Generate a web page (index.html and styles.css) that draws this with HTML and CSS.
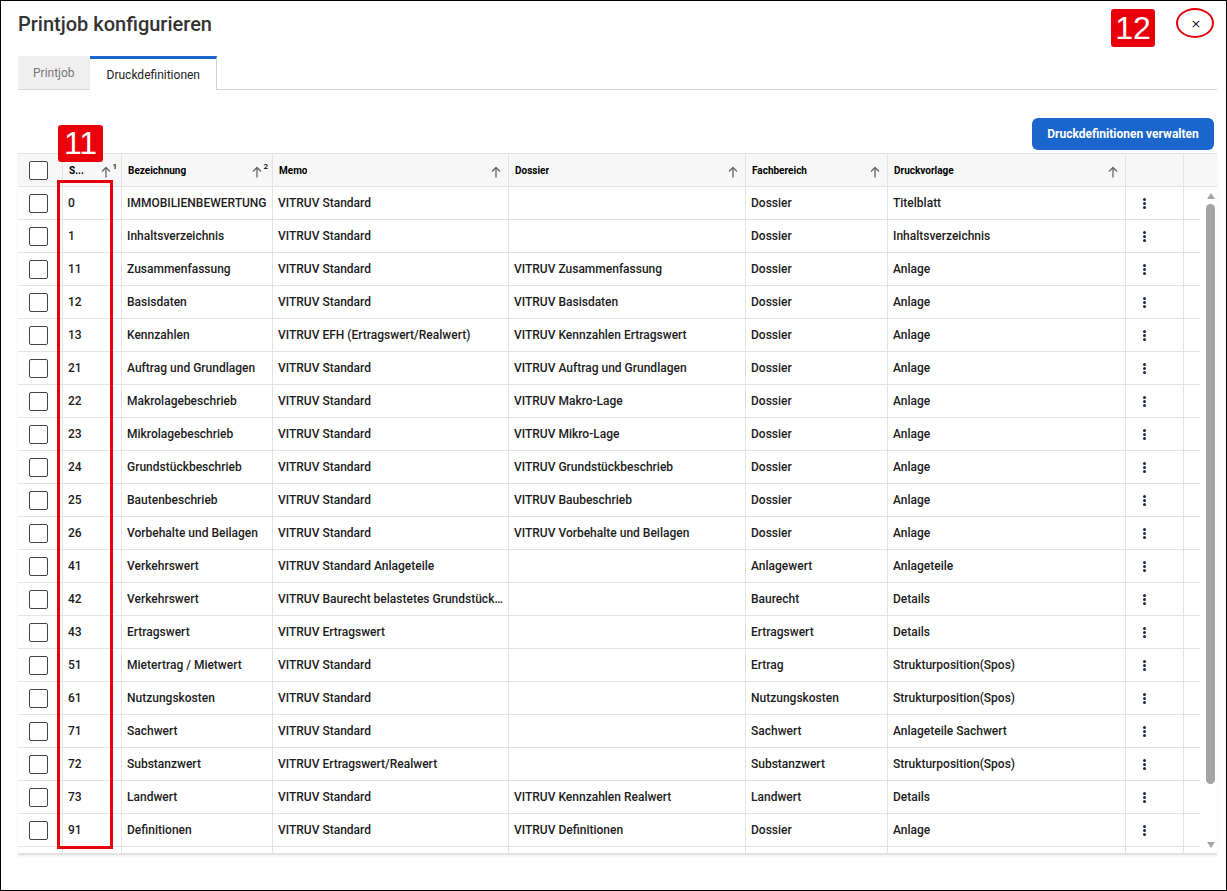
FILE: index.html
```html
<!DOCTYPE html>
<html lang="de">
<head>
    <meta charset="UTF-8">
    <title>Printjob konfigurieren</title>
    <link rel="stylesheet" href="styles.css">
</head>
<body>
    <div class="dialog">
        <div class="dialogHead">
            <h1 class="title">Printjob konfigurieren</h1>
            <button class="close">&times;</button>
        </div>
        <div class="tabs">
            <div class="tab">Printjob</div>
            <div class="tab active">Druckdefinitionen</div>
        </div>
        <div class="toolbar">
            <button class="primary">Druckdefinitionen verwalten</button>
        </div>
        <div class="grid">
            <div class="gridHead">
                <div class="row headRow">
                    <div class="hcell check"><span class="box"></span></div>
                    <div class="hcell"><span class="label">S...</span><span class="sort"><svg viewBox="0 0 10 12"><path d="M5 11.5V1.5M1 5.5L5 1.5L9 5.5"/></svg><sup>1</sup></span></div>
                    <div class="hcell"><span class="label">Bezeichnung</span><span class="sort"><svg viewBox="0 0 10 12"><path d="M5 11.5V1.5M1 5.5L5 1.5L9 5.5"/></svg><sup>2</sup></span></div>
                    <div class="hcell"><span class="label">Memo</span><span class="sort"><svg viewBox="0 0 10 12"><path d="M5 11.5V1.5M1 5.5L5 1.5L9 5.5"/></svg></span></div>
                    <div class="hcell"><span class="label">Dossier</span><span class="sort"><svg viewBox="0 0 10 12"><path d="M5 11.5V1.5M1 5.5L5 1.5L9 5.5"/></svg></span></div>
                    <div class="hcell"><span class="label">Fachbereich</span><span class="sort"><svg viewBox="0 0 10 12"><path d="M5 11.5V1.5M1 5.5L5 1.5L9 5.5"/></svg></span></div>
                    <div class="hcell"><span class="label">Druckvorlage</span><span class="sort"><svg viewBox="0 0 10 12"><path d="M5 11.5V1.5M1 5.5L5 1.5L9 5.5"/></svg></span></div>
                    <div class="hcell"></div>
                    <div class="hcell"></div>
                </div>
                <div class="scrollHead"></div>
            </div>
            <div class="gridBody">
                <div class="rows">
                    <div class="row"><div class="cell check"><span class="box"></span></div><div class="cell">0</div><div class="cell">IMMOBILIENBEWERTUNG</div><div class="cell">VITRUV Standard</div><div class="cell"></div><div class="cell">Dossier</div><div class="cell">Titelblatt</div><div class="cell menu"><span class="kebab"></span></div><div class="cell"></div></div>
                    <div class="row"><div class="cell check"><span class="box"></span></div><div class="cell">1</div><div class="cell">Inhaltsverzeichnis</div><div class="cell">VITRUV Standard</div><div class="cell"></div><div class="cell">Dossier</div><div class="cell">Inhaltsverzeichnis</div><div class="cell menu"><span class="kebab"></span></div><div class="cell"></div></div>
                    <div class="row"><div class="cell check"><span class="box"></span></div><div class="cell">11</div><div class="cell">Zusammenfassung</div><div class="cell">VITRUV Standard</div><div class="cell">VITRUV Zusammenfassung</div><div class="cell">Dossier</div><div class="cell">Anlage</div><div class="cell menu"><span class="kebab"></span></div><div class="cell"></div></div>
                    <div class="row"><div class="cell check"><span class="box"></span></div><div class="cell">12</div><div class="cell">Basisdaten</div><div class="cell">VITRUV Standard</div><div class="cell">VITRUV Basisdaten</div><div class="cell">Dossier</div><div class="cell">Anlage</div><div class="cell menu"><span class="kebab"></span></div><div class="cell"></div></div>
                    <div class="row"><div class="cell check"><span class="box"></span></div><div class="cell">13</div><div class="cell">Kennzahlen</div><div class="cell">VITRUV EFH (Ertragswert/Realwert)</div><div class="cell">VITRUV Kennzahlen Ertragswert</div><div class="cell">Dossier</div><div class="cell">Anlage</div><div class="cell menu"><span class="kebab"></span></div><div class="cell"></div></div>
                    <div class="row"><div class="cell check"><span class="box"></span></div><div class="cell">21</div><div class="cell">Auftrag und Grundlagen</div><div class="cell">VITRUV Standard</div><div class="cell">VITRUV Auftrag und Grundlagen</div><div class="cell">Dossier</div><div class="cell">Anlage</div><div class="cell menu"><span class="kebab"></span></div><div class="cell"></div></div>
                    <div class="row"><div class="cell check"><span class="box"></span></div><div class="cell">22</div><div class="cell">Makrolagebeschrieb</div><div class="cell">VITRUV Standard</div><div class="cell">VITRUV Makro-Lage</div><div class="cell">Dossier</div><div class="cell">Anlage</div><div class="cell menu"><span class="kebab"></span></div><div class="cell"></div></div>
                    <div class="row"><div class="cell check"><span class="box"></span></div><div class="cell">23</div><div class="cell">Mikrolagebeschrieb</div><div class="cell">VITRUV Standard</div><div class="cell">VITRUV Mikro-Lage</div><div class="cell">Dossier</div><div class="cell">Anlage</div><div class="cell menu"><span class="kebab"></span></div><div class="cell"></div></div>
                    <div class="row"><div class="cell check"><span class="box"></span></div><div class="cell">24</div><div class="cell">Grundstückbeschrieb</div><div class="cell">VITRUV Standard</div><div class="cell">VITRUV Grundstückbeschrieb</div><div class="cell">Dossier</div><div class="cell">Anlage</div><div class="cell menu"><span class="kebab"></span></div><div class="cell"></div></div>
                    <div class="row"><div class="cell check"><span class="box"></span></div><div class="cell">25</div><div class="cell">Bautenbeschrieb</div><div class="cell">VITRUV Standard</div><div class="cell">VITRUV Baubeschrieb</div><div class="cell">Dossier</div><div class="cell">Anlage</div><div class="cell menu"><span class="kebab"></span></div><div class="cell"></div></div>
                    <div class="row"><div class="cell check"><span class="box"></span></div><div class="cell">26</div><div class="cell">Vorbehalte und Beilagen</div><div class="cell">VITRUV Standard</div><div class="cell">VITRUV Vorbehalte und Beilagen</div><div class="cell">Dossier</div><div class="cell">Anlage</div><div class="cell menu"><span class="kebab"></span></div><div class="cell"></div></div>
                    <div class="row"><div class="cell check"><span class="box"></span></div><div class="cell">41</div><div class="cell">Verkehrswert</div><div class="cell">VITRUV Standard Anlageteile</div><div class="cell"></div><div class="cell">Anlagewert</div><div class="cell">Anlageteile</div><div class="cell menu"><span class="kebab"></span></div><div class="cell"></div></div>
                    <div class="row"><div class="cell check"><span class="box"></span></div><div class="cell">42</div><div class="cell">Verkehrswert</div><div class="cell">VITRUV Baurecht belastetes Grundstücksrecht</div><div class="cell"></div><div class="cell">Baurecht</div><div class="cell">Details</div><div class="cell menu"><span class="kebab"></span></div><div class="cell"></div></div>
                    <div class="row"><div class="cell check"><span class="box"></span></div><div class="cell">43</div><div class="cell">Ertragswert</div><div class="cell">VITRUV Ertragswert</div><div class="cell"></div><div class="cell">Ertragswert</div><div class="cell">Details</div><div class="cell menu"><span class="kebab"></span></div><div class="cell"></div></div>
                    <div class="row"><div class="cell check"><span class="box"></span></div><div class="cell">51</div><div class="cell">Mietertrag / Mietwert</div><div class="cell">VITRUV Standard</div><div class="cell"></div><div class="cell">Ertrag</div><div class="cell">Strukturposition(Spos)</div><div class="cell menu"><span class="kebab"></span></div><div class="cell"></div></div>
                    <div class="row"><div class="cell check"><span class="box"></span></div><div class="cell">61</div><div class="cell">Nutzungskosten</div><div class="cell">VITRUV Standard</div><div class="cell"></div><div class="cell">Nutzungskosten</div><div class="cell">Strukturposition(Spos)</div><div class="cell menu"><span class="kebab"></span></div><div class="cell"></div></div>
                    <div class="row"><div class="cell check"><span class="box"></span></div><div class="cell">71</div><div class="cell">Sachwert</div><div class="cell">VITRUV Standard</div><div class="cell"></div><div class="cell">Sachwert</div><div class="cell">Anlageteile Sachwert</div><div class="cell menu"><span class="kebab"></span></div><div class="cell"></div></div>
                    <div class="row"><div class="cell check"><span class="box"></span></div><div class="cell">72</div><div class="cell">Substanzwert</div><div class="cell">VITRUV Ertragswert/Realwert</div><div class="cell"></div><div class="cell">Substanzwert</div><div class="cell">Strukturposition(Spos)</div><div class="cell menu"><span class="kebab"></span></div><div class="cell"></div></div>
                    <div class="row"><div class="cell check"><span class="box"></span></div><div class="cell">73</div><div class="cell">Landwert</div><div class="cell">VITRUV Standard</div><div class="cell">VITRUV Kennzahlen Realwert</div><div class="cell">Landwert</div><div class="cell">Details</div><div class="cell menu"><span class="kebab"></span></div><div class="cell"></div></div>
                    <div class="row"><div class="cell check"><span class="box"></span></div><div class="cell">91</div><div class="cell">Definitionen</div><div class="cell">VITRUV Standard</div><div class="cell">VITRUV Definitionen</div><div class="cell">Dossier</div><div class="cell">Anlage</div><div class="cell menu"><span class="kebab"></span></div><div class="cell"></div></div>
                    <div class="row"><div class="cell check"></div><div class="cell"></div><div class="cell"></div><div class="cell"></div><div class="cell"></div><div class="cell"></div><div class="cell"></div><div class="cell"></div><div class="cell"></div></div>
                </div>
                <div class="scrollbar">
                    <span class="arrowUp"></span>
                    <span class="thumb"></span>
                    <span class="arrowDown"></span>
                </div>
            </div>
        </div>
    </div>

    <!-- annotation markers -->
    <div class="marker markerTable">11</div>
    <div class="frame frameColumn"></div>
    <div class="marker markerClose">12</div>
    <div class="ring"></div>
</body>
</html>
```

FILE: styles.css
```css
:root{
    --line: #e3e3e3;
    --text: #1c1c1c;
    --blue: #1a66cc;
    --mark: #e8000b;
}
*{
    box-sizing: border-box;
}
html, body{
    margin: 0;
    height: 100%;
}
body{
    position: relative;
    font-family: Roboto, "Liberation Sans", sans-serif;
    color: var(--text);
    background: #fff;
}
.dialog{
    display: flex;
    flex-direction: column;
    width: 1227px;
    height: 891px;
    border: 1px solid #000;
    padding: 0 9px 0 17px;
}
.dialogHead{
    display: flex;
    align-items: flex-start;
    height: 55px;
    padding-top: 11px;
}
.title{
    flex: 1;
    margin: 0;
    font-size: 20px;
    line-height: 25px;
    font-weight: 500;
    color: #333;
}
.close{
    width: 24px;
    height: 20px;
    margin: 2px 9px 0 0;
    padding: 0;
    border: none;
    background: none;
    font-family: "DejaVu Sans", sans-serif;
    font-size: 13px;
    line-height: 20px;
    color: #222;
}
.tabs{
    display: flex;
    height: 34px;
    border-bottom: 1px solid #d4d4d4;
}
.tab{
    display: flex;
    align-items: center;
    justify-content: center;
    height: 33px;
    padding: 0 15px;
    background: #efefef;
    color: #777;
    font-size: 12px;
}
.tab.active{
    height: 34px;
    margin-bottom: -1px;
    padding: 0 16px 0 17px;
    background: #fff;
    color: #222;
    border-top: 3px solid var(--blue);
    border-right: 1px solid #d4d4d4;
}
.toolbar{
    display: flex;
    justify-content: flex-end;
    padding: 28px 3px 3px 0;
}
.primary{
    height: 32px;
    width: 182px;
    border: none;
    border-radius: 6px;
    background: var(--blue);
    color: #fff;
    font-family: Roboto, sans-serif;
    font-size: 12px;
    font-weight: 700;
}
.grid{
    display: flex;
    flex-direction: column;
    border-bottom: 2px solid #e2e2e2;
    box-shadow: 0 1px 2px rgba(0,0,0,0.08);
}
.gridHead{
    display: flex;
    background: #f7f7f7;
    border-top: 1px solid var(--line);
    border-bottom: 1px solid var(--line);
}
.row{
    display: grid;
    grid-template-columns: 45px 59px 151px 236px 237px 142px 238px 58px 16px;
    height: 33px;
    border-bottom: 1px solid var(--line);
}
.headRow{
    height: 32px;
    border-bottom: none;
}
.scrollHead{
    width: 17px;
}
.hcell{
    display: flex;
    align-items: center;
    padding: 0 5px 0 6px;
    border-right: 1px solid var(--line);
    font-size: 10px;
    font-weight: 700;
    color: #000;
    min-width: 0;
}
.hcell:last-child, .cell:last-child{
    border-right: none;
}
.label{
    white-space: nowrap;
    overflow: hidden;
}
.sort{
    display: flex;
    align-items: flex-start;
    margin-left: auto;
    padding-right: 2px;
}
.sort svg{
    width: 10px;
    height: 12px;
    margin-top: 3px;
    fill: none;
    stroke: #666;
    stroke-width: 1.3;
}
.sort sup{
    font-size: 8px;
    line-height: 8px;
    font-weight: 500;
    margin-left: 1px;
    margin-right: -3px;
}
.box{
    width: 19px;
    height: 19px;
    border: 1px solid #444;
    border-radius: 2px;
    background: #fff;
}
.gridBody{
    display: flex;
    height: 666px;
    overflow: hidden;
}
.rows{
    width: 1182px;
}
.cell{
    padding: 0 0 0 5px;
    border-right: 1px solid var(--line);
    font-size: 12px;
    font-weight: 500;
    line-height: 32px;
    white-space: nowrap;
    overflow: hidden;
    text-overflow: ellipsis;
}
.hcell.check, .cell.check{
    display: flex;
    align-items: center;
    justify-content: center;
    padding: 0 4px 0 0;
}
.menu{
    display: flex;
    align-items: center;
    padding: 0 0 0 17px;
}
.kebab{
    width: 3px;
    height: 3px;
    border-radius: 50%;
    background: #1d2b46;
    box-shadow: 0 -4px 0 #1d2b46, 0 4px 0 #1d2b46;
}
.scrollbar{
    display: flex;
    flex-direction: column;
    align-items: center;
    width: 17px;
    padding: 6px 1px 5px 5px;
}
.arrowUp, .arrowDown{
    width: 0;
    height: 0;
    border-left: 4px solid transparent;
    border-right: 4px solid transparent;
}
.arrowUp{
    border-bottom: 6px solid #a4a4a4;
}
.arrowDown{
    margin-top: auto;
    border-top: 6px solid #a4a4a4;
}
.thumb{
    width: 9px;
    height: 580px;
    margin-top: 5px;
    border-radius: 5px;
    background: #a4a4a4;
}

/* annotation markers */
.marker{
    position: absolute;
    display: flex;
    align-items: center;
    justify-content: center;
    background: var(--mark);
    color: #fff;
    border-radius: 3px;
    font-family: "Liberation Sans", Arial, sans-serif;
    font-size: 32px;
}
.markerTable{
    left: 58px;
    top: 125px;
    width: 45px;
    height: 37px;
}
.markerClose{
    left: 1111px;
    top: 9px;
    width: 44px;
    height: 38px;
}
.frame{
    position: absolute;
    border: 3px solid var(--mark);
}
.frameColumn{
    left: 57px;
    top: 180px;
    width: 56px;
    height: 669px;
}
.ring{
    position: absolute;
    left: 1176px;
    top: 8px;
    width: 38px;
    height: 30px;
    border: 2px solid var(--mark);
    border-radius: 50%;
}
```
